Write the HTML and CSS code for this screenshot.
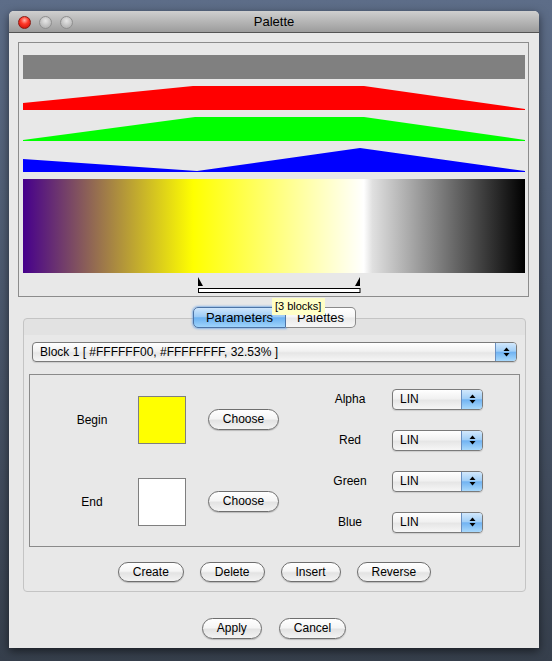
FILE: index.html
```html
<!DOCTYPE html>
<html>
<head>
<meta charset="utf-8">
<link rel="stylesheet" href="styles.css">
</head>
<body>
<div class="window">
  <div class="titlebar">
    <div class="lights">
      <span class="light red"></span>
      <span class="light"></span>
      <span class="light"></span>
    </div>
    <div class="title">Palette</div>
    <div></div>
  </div>
  <div class="graph">
    <div class="alpha-bar"></div>
    <svg class="chan" width="502" height="24" viewBox="0 0 502 24"><polygon fill="#ff0000" points="0,17 170,0 341,0 502,23 502,24 0,24"/></svg>
    <svg class="chan" width="502" height="24" viewBox="0 0 502 24"><polygon fill="#00ff00" points="0,23 172,0 341,0 502,23 502,24 0,24"/></svg>
    <svg class="chan" width="502" height="24" viewBox="0 0 502 24"><polygon fill="#0000ff" points="0,11 174,23 337,0 502,23 502,24 0,24"/></svg>
    <div class="gradient"></div>
    <svg class="selector" width="502" height="17" viewBox="0 0 502 17">
      <polygon fill="#000" points="175,0 175,9 180,9"/>
      <polygon fill="#000" points="337,0 337,9 332,9"/>
      <rect x="175.5" y="11.5" width="161.5" height="4" fill="#fff" stroke="#000" stroke-width="1"/>
    </svg>
  </div>
  <div class="pane">
    <div class="tabs">
      <div class="tabgroup">
        <div class="tab first active">Parameters</div>
        <div class="tab last">Palettes</div>
        <div class="tooltip">[3 blocks]</div>
      </div>
    </div>
    <div class="combo">
      <div class="val">Block 1 [ #FFFFFF00, #FFFFFFFF, 32.53% ]</div>
      <div class="arrows"><svg width="7" height="10" viewBox="0 0 7 10"><polygon points="0.5,4 3.5,0.5 6.5,4" fill="#000"/><polygon points="0.5,6 6.5,6 3.5,9.5" fill="#000"/></svg></div>
    </div>
    <div class="editor">
      <div class="ends">
        <div class="lbl">Begin</div>
        <div class="swatch yellow"></div>
        <button class="btn choose">Choose</button>
        <div class="lbl">End</div>
        <div class="swatch white"></div>
        <button class="btn choose">Choose</button>
      </div>
      <div class="channels">
        <div class="lbl">Alpha</div>
        <div class="select"><div class="val">LIN</div><div class="arrows"><svg width="7" height="10" viewBox="0 0 7 10"><polygon points="0.5,4 3.5,0.5 6.5,4" fill="#000"/><polygon points="0.5,6 6.5,6 3.5,9.5" fill="#000"/></svg></div></div>
        <div class="lbl">Red</div>
        <div class="select"><div class="val">LIN</div><div class="arrows"><svg width="7" height="10" viewBox="0 0 7 10"><polygon points="0.5,4 3.5,0.5 6.5,4" fill="#000"/><polygon points="0.5,6 6.5,6 3.5,9.5" fill="#000"/></svg></div></div>
        <div class="lbl">Green</div>
        <div class="select"><div class="val">LIN</div><div class="arrows"><svg width="7" height="10" viewBox="0 0 7 10"><polygon points="0.5,4 3.5,0.5 6.5,4" fill="#000"/><polygon points="0.5,6 6.5,6 3.5,9.5" fill="#000"/></svg></div></div>
        <div class="lbl">Blue</div>
        <div class="select"><div class="val">LIN</div><div class="arrows"><svg width="7" height="10" viewBox="0 0 7 10"><polygon points="0.5,4 3.5,0.5 6.5,4" fill="#000"/><polygon points="0.5,6 6.5,6 3.5,9.5" fill="#000"/></svg></div></div>
      </div>
    </div>
    <div class="actions">
      <button class="btn">Create</button>
      <button class="btn">Delete</button>
      <button class="btn">Insert</button>
      <button class="btn">Reverse</button>
    </div>
  </div>
  <div class="dialog-buttons">
    <button class="btn">Apply</button>
    <button class="btn">Cancel</button>
  </div>
</div>
</body>
</html>
```

FILE: styles.css
```css
html, body {
  margin: 0;
  height: 661px;
}
body {
  box-sizing: border-box;
  padding: 11px 0 0 9px;
  background: linear-gradient(#5d6d88, #363f4c);
  font-family: "Liberation Sans", Arial, sans-serif;
  font-size: 12px;
  color: #000;
  overflow: hidden;
}
.window {
  width: 530px;
  height: 637px;
  background: #e8e8e8;
  border-radius: 5px 5px 0 0;
  box-shadow: 0 3px 10px rgba(0,0,0,0.55);
  overflow: hidden;
  display: flex;
  flex-direction: column;
}
.titlebar {
  height: 21px;
  flex: none;
  border-bottom: 1px solid #545454;
  background: linear-gradient(#cfcfcf, #9c9c9c);
  display: grid;
  grid-template-columns: 1fr auto 1fr;
  align-items: center;
}
.lights {
  display: flex;
  gap: 8px;
  padding-left: 9px;
  padding-top: 1px;
}
.light {
  width: 13px;
  height: 13px;
  border-radius: 50%;
  box-sizing: border-box;
  border: 1px solid #8e8e8e;
  background: radial-gradient(circle at 50% 35%, #e6e6e6 0%, #c2c2c2 55%, #a6a6a6 100%);
}
.light.red {
  border-color: #8a1a12;
  background: radial-gradient(circle at 50% 30%, #ffb4aa 0%, #ff3a2a 40%, #c20800 100%);
}
.title {
  font-size: 13px;
  line-height: 21px;
}
.graph {
  flex: none;
  margin: 9px 0 0 9px;
  width: 502px;
  height: 239px;
  border: 1px solid #8c8c8c;
  padding: 12px 3px 2px 4px;
  display: flex;
  flex-direction: column;
  gap: 7px;
}
.graph > * {
  flex: none;
}
.alpha-bar {
  width: 502px;
  height: 24px;
  background: #808080;
}
.chan {
  display: block;
}
.gradient {
  width: 502px;
  height: 94px;
  background: linear-gradient(to right, rgb(70,0,140) 0%, rgb(255,255,0) 33.9%, #ffffff 67.9%, #e0e0e0 69.6%, #000000 100%);
}
.selector {
  display: block;
  margin-top: -3px;
}
.pane {
  flex: none;
  margin: 21px 0 0 14px;
  width: 501px;
  height: 263px;
  border: 1px solid #c4c4c4;
  border-radius: 4px;
  background: linear-gradient(#e2e2e2 0, #e2e2e2 16px, #e8e8e8 16px);
  padding: 0 0 9px;
  display: flex;
  flex-direction: column;
}
.tabs {
  margin-top: -12px;
  display: flex;
  justify-content: center;
}
.tabgroup {
  position: relative;
  display: flex;
}
.tab {
  height: 21px;
  box-sizing: border-box;
  padding: 0 11px;
  font-size: 13px;
  line-height: 19px;
  border: 1px solid #8a8a8a;
  background: linear-gradient(#ffffff 0%, #f6f6f6 48%, #e9e9e9 52%, #f7f7f7 100%);
}
.tab.first {
  border-radius: 5px 0 0 5px;
  padding: 0 12px;
}
.tab.last {
  border-radius: 0 5px 5px 0;
  border-left: none;
}
.tab.active {
  border-color: #4d74a6;
  background: linear-gradient(#cfe6fc 0%, #9ccbf6 45%, #6cb1f1 52%, #9fd4fb 100%);
  box-shadow: 0 0 2px 1px rgba(80,150,230,0.6);
}
.tooltip {
  position: absolute;
  left: 79px;
  top: -9px;
  height: 17px;
  box-sizing: border-box;
  padding: 0 4px 0 3px;
  font-size: 11px;
  line-height: 17px;
  background: #ffffc6;
  white-space: nowrap;
}
.combo, .select {
  display: flex;
  box-sizing: border-box;
  border: 1px solid #7a7a7a;
  border-radius: 4px;
  overflow: hidden;
  background: linear-gradient(#ffffff 0%, #f1f1f1 45%, #e6e6e6 55%, #f6f6f6 100%);
  box-shadow: 0 1px 1px rgba(0,0,0,0.12);
}
.combo {
  margin: 14px 8px 0;
  height: 20px;
  flex: none;
}
.combo .val, .select .val {
  flex: 1;
  padding-left: 7px;
  line-height: 18px;
  font-size: 12px;
  white-space: nowrap;
}
.select .val {
  line-height: 19px;
}
.arrows {
  width: 20px;
  border-left: 1px solid #6a8fc0;
  background: linear-gradient(#d2e8fc 0%, #a2cff7 45%, #71b3f2 52%, #a9d9fc 100%);
  display: flex;
  align-items: center;
  justify-content: center;
}
.arrows svg {
  display: block;
}
.editor {
  flex: none;
  margin: 12px 5px 0;
  height: 173px;
  box-sizing: border-box;
  border: 1px solid #8a8a8a;
  display: flex;
  align-items: center;
}
.ends {
  margin-left: 32px;
  display: grid;
  grid-template-columns: 60px 48px 77px;
  column-gap: 16px;
  row-gap: 34px;
  align-items: center;
}
.lbl {
  text-align: center;
  font-size: 12px;
}
.swatch {
  width: 48px;
  height: 48px;
  box-sizing: border-box;
  border: 1px solid #7f7f7f;
}
.swatch.yellow { background: #ffff00; }
.swatch.white { background: #ffffff; }
.btn {
  height: 21px;
  box-sizing: border-box;
  padding: 0 14px;
  margin: 0;
  border: 1px solid #6e6e6e;
  border-radius: 11px;
  background: linear-gradient(#ffffff 0%, #f5f5f5 45%, #e3e3e3 55%, #f3f3f3 100%);
  box-shadow: 0 1px 1px rgba(0,0,0,0.2);
  font-family: "Liberation Sans", Arial, sans-serif;
  font-size: 12px;
  color: #000;
  line-height: 19px;
}
.btn.choose {
  width: 71px;
  justify-self: end;
  padding: 0;
}
.channels {
  margin-left: 41px;
  display: grid;
  grid-template-columns: 60px 91px;
  column-gap: 12px;
  row-gap: 20px;
  align-items: center;
}
.select {
  height: 21px;
}
.actions {
  flex: none;
  margin-top: 15px;
  display: flex;
  justify-content: center;
  gap: 16px;
}
.actions .btn {
  height: 20px;
  line-height: 18px;
}
.dialog-buttons {
  flex: none;
  margin-top: 26px;
  display: flex;
  justify-content: center;
  gap: 17px;
}
```
